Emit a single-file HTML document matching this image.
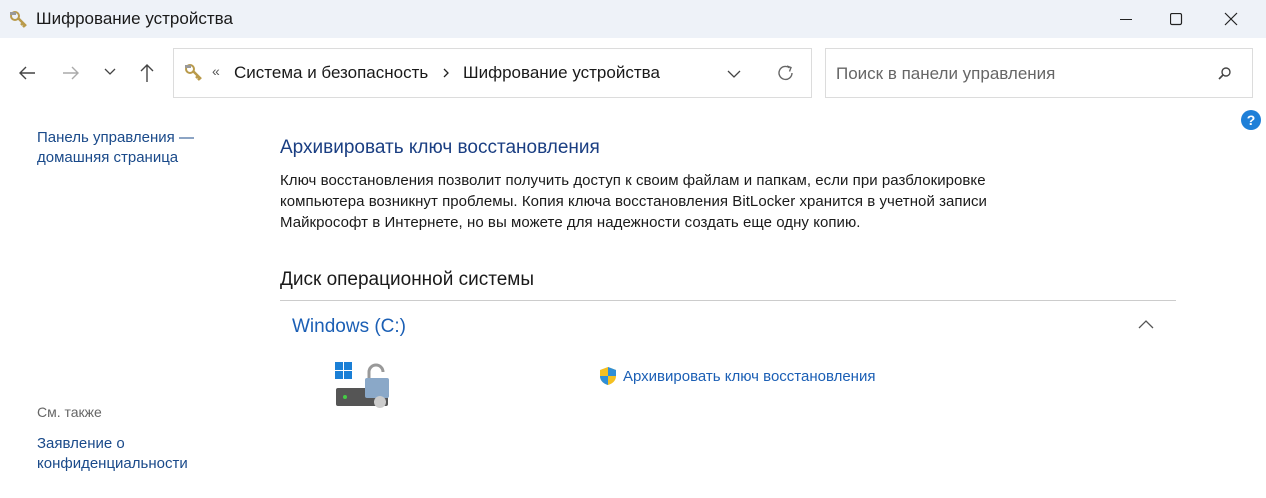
<!DOCTYPE html>
<html><head><meta charset="utf-8"><style>
*{margin:0;padding:0;box-sizing:border-box}
body{width:1266px;height:498px;overflow:hidden;background:#fff;font-family:"Segoe UI","Liberation Sans","Noto Sans CJK SC",sans-serif;color:#1a1a1a;position:relative}
.t{position:absolute;white-space:nowrap}
.title{position:absolute;left:0;top:0;width:1266px;height:38px;background:#eef2f8}
.box{position:absolute;border:1px solid #dcdcdc;background:#fff}
.link{color:#1b5fb5}
svg{position:absolute}
</style></head><body>
<div class="title"></div>
<svg style="left:9px;top:9px" width="20" height="20"><circle cx="6" cy="7" r="4" fill="none" stroke="#b99a4a" stroke-width="2"/><path d="M9 9 L17 17 M14 14 L12 16 M16 16 L14 18" stroke="#b99a4a" stroke-width="2.5"/><rect x="1" y="3" width="6" height="3" fill="#999"/></svg>
<div class="t" style="left:36px;top:9px;font-size:17px">Шифрование устройства</div>
<svg style="left:1120px;top:10px" width="14" height="20"><path d="M0 9.5 H12" stroke="#222" stroke-width="1"/></svg>
<svg style="left:1170px;top:13px" width="13" height="13"><rect x="0.5" y="0.5" width="11" height="11" rx="1.5" fill="none" stroke="#222" stroke-width="1.2"/></svg>
<svg style="left:1224px;top:12px" width="14" height="14"><path d="M1 1 L13 13 M13 1 L1 13" stroke="#222" stroke-width="1.2"/></svg>
<svg style="left:18px;top:64px" width="20" height="18"><path d="M17 9 H2 M8 3 L2 9 L8 15" stroke="#444" stroke-width="1.4" fill="none"/></svg>
<svg style="left:61px;top:64px" width="20" height="18"><path d="M2 9 H17 M11 3 L17 9 L11 15" stroke="#aaa" stroke-width="1.4" fill="none"/></svg>
<svg style="left:104px;top:67px" width="12" height="10"><path d="M1 2 L6 7 L11 2" stroke="#444" stroke-width="1.3" fill="none"/></svg>
<svg style="left:138px;top:63px" width="18" height="20"><path d="M9 19 V2 M3 8 L9 2 L15 8" stroke="#444" stroke-width="1.4" fill="none"/></svg>
<div class="box" style="left:173px;top:48px;width:639px;height:50px"></div>
<svg style="left:184px;top:62px" width="20" height="20"><circle cx="6" cy="7" r="4" fill="none" stroke="#b99a4a" stroke-width="2"/><path d="M9 9 L17 17 M14 14 L12 16 M16 16 L14 18" stroke="#b99a4a" stroke-width="2.5"/><rect x="1" y="3" width="6" height="3" fill="#999"/></svg>
<div class="t" style="left:212px;top:63px;font-size:14px;color:#555">«</div>
<div class="t" style="left:234px;top:63px;font-size:17px">Система и безопасность</div>
<svg style="left:442px;top:67px" width="8" height="12"><path d="M2 2 L6 6 L2 10" stroke="#222" stroke-width="1.3" fill="none"/></svg>
<div class="t" style="left:463px;top:63px;font-size:17px">Шифрование устройства</div>
<svg style="left:727px;top:69px" width="14" height="10"><path d="M1 2 L7 8 L13 2" stroke="#444" stroke-width="1.3" fill="none"/></svg>
<svg style="left:777px;top:64px" width="18" height="18"><path d="M15 9 A6.5 6.5 0 1 1 12.5 3.8" stroke="#666" stroke-width="1.4" fill="none"/><path d="M10 2 L14 3.5 L12.5 7.5" stroke="#666" stroke-width="1.4" fill="none"/></svg>
<div class="box" style="left:825px;top:48px;width:428px;height:50px"></div>
<div class="t" style="left:836px;top:64px;font-size:17px;color:#666">Поиск в панели управления</div>
<svg style="left:1218px;top:66px" width="14" height="14"><circle cx="8" cy="6" r="4" fill="none" stroke="#444" stroke-width="1.4"/><path d="M5 9 L1 13" stroke="#444" stroke-width="1.6"/></svg>
<div style="position:absolute;left:1241px;top:110px;width:20px;height:20px;border-radius:50%;background:#1e7fd8;color:#fff;font-size:14px;font-weight:bold;text-align:center;line-height:20px">?</div>
<div class="t" style="left:37px;top:128px;font-size:15px;line-height:20px;color:#1a4a8a">Панель управления —<br>домашняя страница</div>
<div class="t" style="left:37px;top:404px;font-size:14px;color:#666">См. также</div>
<div class="t" style="left:37px;top:434px;font-size:15px;line-height:20px;color:#1a4a8a">Заявление о<br>конфиденциальности</div>
<div class="t" style="left:280px;top:137px;font-size:19px;color:#1a3e82">Архивировать ключ восстановления</div>
<div class="t" style="left:280px;top:170px;font-size:15px;line-height:21px;letter-spacing:0.05px">Ключ восстановления позволит получить доступ к своим файлам и папкам, если при разблокировке<br>компьютера возникнут проблемы. Копия ключа восстановления BitLocker хранится в учетной записи<br>Майкрософт в Интернете, но вы можете для надежности создать еще одну копию.</div>
<div class="t" style="left:280px;top:269px;font-size:19px">Диск операционной системы</div>
<div style="position:absolute;left:280px;top:300px;width:896px;height:1px;background:#ccc"></div>
<div class="t link" style="left:292px;top:316px;font-size:19px">Windows (C:)</div>
<svg style="left:1138px;top:320px" width="16" height="10"><path d="M1 8 L8 1 L15 8" stroke="#555" stroke-width="1.3" fill="none"/></svg>
<svg style="left:333px;top:360px" width="62" height="50">
<rect x="2" y="2" width="8" height="8" fill="#1a7fd6"/><rect x="11" y="2" width="8" height="8" fill="#1a7fd6"/><rect x="2" y="11" width="8" height="8" fill="#1a7fd6"/><rect x="11" y="11" width="8" height="8" fill="#1a7fd6"/>
<rect x="3" y="28" width="52" height="18" rx="2" fill="#555"/><circle cx="12" cy="37" r="2" fill="#4c4"/>
<path d="M36 20 V12 a7 7 0 0 1 14 0" stroke="#999" stroke-width="3" fill="none"/>
<rect x="32" y="18" width="24" height="20" rx="2" fill="#8aa8c8"/><circle cx="47" cy="42" r="6" fill="#ccc"/>
</svg>
<svg style="left:598px;top:366px" width="20" height="20"><path d="M10 1 L18 4 V10 C18 15 14 18 10 19 C6 18 2 15 2 10 V4 Z" fill="#f4c021"/><path d="M10 1 L18 4 V10 H10 Z M2 10 H10 V19 C6 18 2 15 2 10Z" fill="#2f8fd8"/></svg>
<div class="t link" style="left:623px;top:368px;font-size:15px">Архивировать ключ восстановления</div>
</body></html>
